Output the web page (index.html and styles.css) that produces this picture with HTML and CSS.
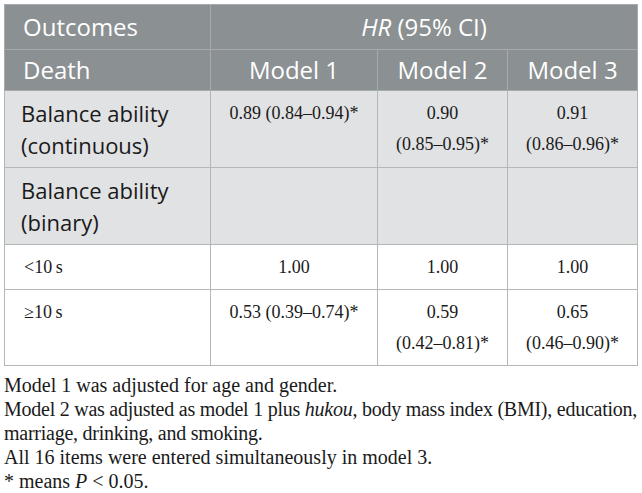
FILE: index.html
```html
<!DOCTYPE html>
<html lang="en">
<head>
    <meta charset="UTF-8">
    <title>Balance ability and death</title>
    <link rel="stylesheet" href="styles.css">
</head>
<body>
    <div class="wrap">
        <table class="hr-table">
            <colgroup>
                <col class="col-label">
                <col class="col-model1">
                <col class="col-model">
                <col class="col-model">
            </colgroup>
            <thead>
                <tr class="head-top">
                    <th class="left">Outcomes</th>
                    <th colspan="3"><i>HR</i> (95% CI)</th>
                </tr>
                <tr class="head-sub">
                    <th class="left">Death</th>
                    <th>Model 1</th>
                    <th>Model 2</th>
                    <th>Model 3</th>
                </tr>
            </thead>
            <tbody>
                <tr class="shaded">
                    <td class="label">Balance ability<br>(continuous)</td>
                    <td>0.89 (0.84–0.94)*</td>
                    <td>0.90<br>(0.85–0.95)*</td>
                    <td>0.91<br>(0.86–0.96)*</td>
                </tr>
                <tr class="shaded">
                    <td class="label">Balance ability<br>(binary)</td>
                    <td></td>
                    <td></td>
                    <td></td>
                </tr>
                <tr>
                    <td class="sub">&lt;10&thinsp;s</td>
                    <td>1.00</td>
                    <td>1.00</td>
                    <td>1.00</td>
                </tr>
                <tr class="last">
                    <td class="sub">≥10&thinsp;s</td>
                    <td>0.53 (0.39–0.74)*</td>
                    <td>0.59<br>(0.42–0.81)*</td>
                    <td>0.65<br>(0.46–0.90)*</td>
                </tr>
            </tbody>
        </table>

        <div class="notes">
            <p>Model 1 was adjusted for age and gender.</p>
            <p class="tight">Model 2 was adjusted as model 1 plus <i>hukou</i>, body mass index (BMI), education, marriage, drinking, and smoking.</p>
            <p>All 16 items were entered simultaneously in model 3.</p>
            <p>* means <i>P</i> &lt; 0.05.</p>
        </div>
    </div>
</body>
</html>
```

FILE: styles.css
```css
body {
    margin: 0;
    background-color: #fff;
    font-family: "Liberation Serif", serif;
    color: #1a1a1a;
}
.wrap {
    padding: 4px 5px 0 4px;
}
.hr-table {
    width: 633px;
    border-collapse: collapse;
    table-layout: fixed;
    border: 1px solid #b3b7b8;
}
.col-label {
    width: 206px;
}
.col-model1 {
    width: 167px;
}
.col-model {
    width: 130px;
}
.hr-table th {
    background-color: #8b9092;
    color: #fff;
    font-family: "Open Sans", sans-serif;
    font-weight: normal;
    font-size: 24px;
    line-height: 30px;
    text-align: center;
    border: 1px solid #a6aaac;
    padding: 7px 6px 7px 6px;
}
.hr-table .head-sub th {
    padding: 5px 6px 5px 6px;
}
.hr-table th.left {
    text-align: left;
    padding-left: 18px;
}
.hr-table td {
    border: 1px solid #b3b7b8;
    font-size: 18px;
    line-height: 31px;
    text-align: center;
    vertical-align: top;
    padding: 7px 8px 6px 8px;
}
.hr-table tr.shaded td {
    background-color: #e1e2e4;
}
.hr-table td.label {
    font-family: "Open Sans", sans-serif;
    font-size: 22px;
    line-height: 32px;
    text-align: left;
    padding-left: 16px;
    padding-top: 6px;
}
.hr-table td.sub {
    text-align: left;
    padding-left: 19px;
}
.notes {
    margin-top: 7px;
    font-size: 20px;
    line-height: 24px;
}
.notes p {
    margin: 0;
    text-align: justify;
}
.notes p.tight {
    letter-spacing: -0.25px;
}
```
